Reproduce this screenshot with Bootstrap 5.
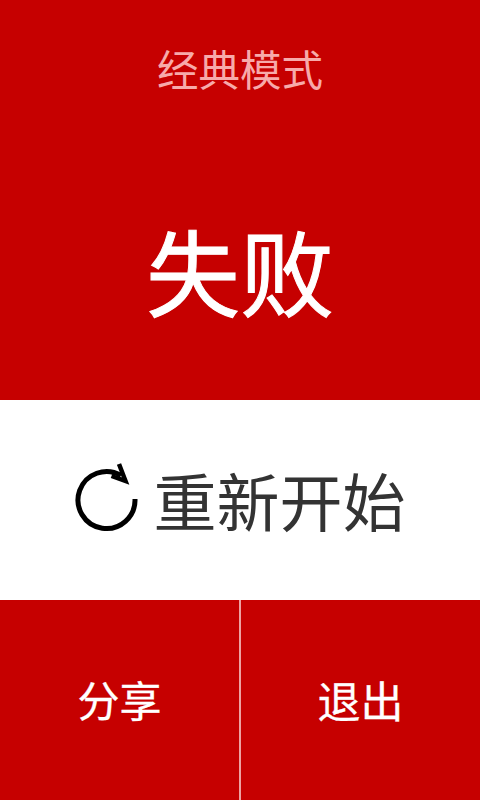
<!DOCTYPE html>
<html lang="zh"><head><meta charset="utf-8">
<link href="https://cdn.jsdelivr.net/npm/bootstrap@5.3.0/dist/css/bootstrap.min.css" rel="stylesheet">
<style>
html,body{width:480px;height:800px;overflow:hidden;margin:0}
body{font-family:"Noto Sans CJK SC","Liberation Sans",sans-serif;background:#c60000}
.screen{width:480px;height:800px}
.hero{height:400px;background:#c60000}
.mode-title{height:144px;padding-bottom:6px;font-size:41.500px;line-height:1;color:#f7aaaa}
.fail-title{height:256px;padding-bottom:6px;font-size:94px;line-height:1;color:#fff;-webkit-text-stroke:1px #fff}
.restart{height:200px;padding-bottom:4px;background:#fff;color:#333;font-size:63px;line-height:1}
.restart-icon{margin-top:-3px;margin-right:-1px}
.bottom-bar{height:200px;background:#c60000;color:#fff;font-size:42px;line-height:1;-webkit-text-stroke:.3px #fff}
.half-left{width:239px;padding-bottom:2px}
.half-right{width:241px;padding:0 0 2px 0;border-left:2px solid #eda3a3;font-size:43px}
</style></head><body>
<div class="screen d-flex flex-column">
<div class="hero d-flex flex-column">
<div class="mode-title d-flex align-items-center justify-content-center">经典模式</div>
<div class="fail-title d-flex align-items-center justify-content-center">失败</div>
</div>
<div class="restart d-flex align-items-center justify-content-center gap-3">
<svg class="restart-icon" width="64" height="72" viewBox="0 0 64 72"><path d="M60 38A28.500 28.500 0 1 1 46 14.500" fill="none" stroke="#000" stroke-width="5"/><path d="M44 3L50.500 20L36.500 15" fill="none" stroke="#000" stroke-width="4.500"/></svg>
<span>重新开始</span>
</div>
<div class="bottom-bar d-flex">
<div class="half-left d-flex align-items-center justify-content-center">分享</div>
<div class="half-right d-flex align-items-center justify-content-center">退出</div>
</div>
</div>
</body></html>
